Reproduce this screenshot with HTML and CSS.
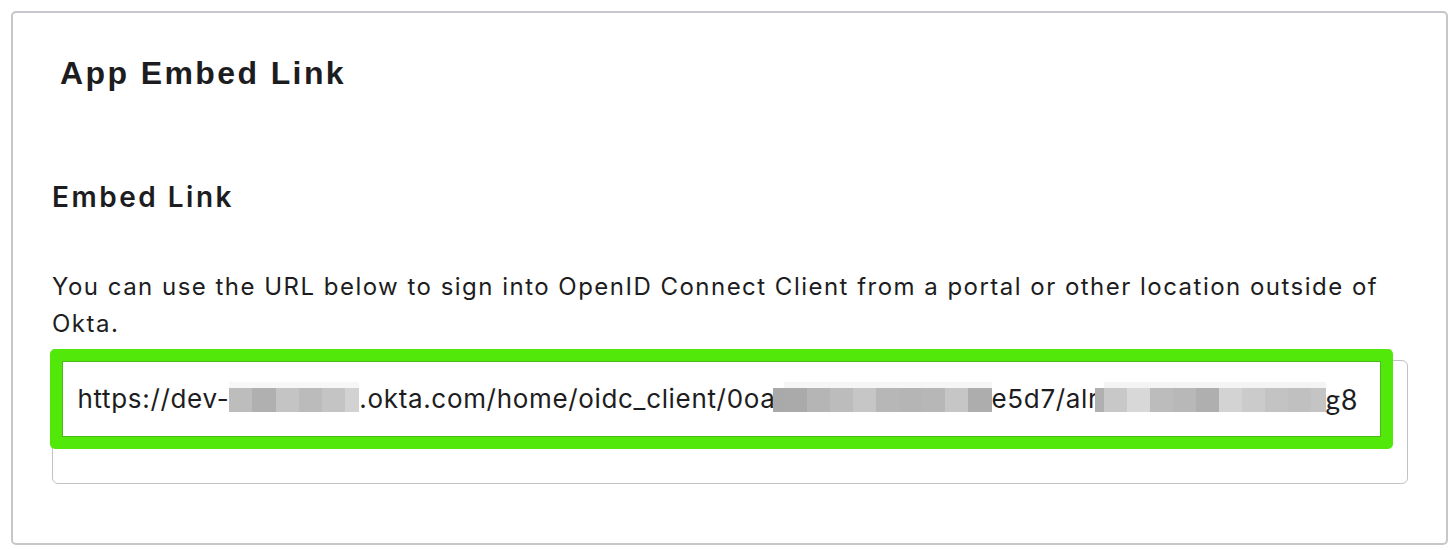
FILE: index.html
```html
<!DOCTYPE html>
<html lang="en">
<head>
<meta charset="utf-8">
<title>App Embed Link</title>
<link rel="stylesheet" href="styles.css">
</head>
<body>
<section class="card">
  <h1 class="card-title">App Embed Link</h1>
  <h2 class="section-title">Embed Link</h2>
  <p class="desc">You can use the URL below to sign into OpenID Connect Client from a portal or other location outside of Okta.</p>
  <div class="field">
    <div class="url"><span>https://dev-</span><span class="mosaic m1"></span><span>.okta.com/home/oidc_client/0oa</span><span class="mosaic m2"></span><span>e5d7/alr</span><span class="mosaic m3"></span><span class="tail">g8</span></div>
    <div class="highlight"></div>
  </div>
</section>
</body>
</html>
```

FILE: styles.css
```css
html, body {
  margin: 0;
  padding: 0;
  background: #ffffff;
}

body {
  padding: 11px 6px 5px 11px;
  font-family: Inter, "Noto Sans", "Liberation Sans", sans-serif;
  color: #1d1d21;
}

.card {
  box-sizing: border-box;
  width: 1437px;
  height: 534px;
  border: 2px solid #c6c6cb;
  border-radius: 5px;
  padding: 40px 38px 0 39px;
  display: flex;
  flex-direction: column;
}

.card-title {
  margin: 0 0 0 8px;
  font-family: "Liberation Sans", Arial, sans-serif;
  font-weight: 700;
  font-size: 32px;
  line-height: 40px;
  letter-spacing: 2.4px;
  color: #1d1d21;
}

.section-title {
  margin: 86px 0 0 0;
  font-weight: 600;
  font-size: 28px;
  line-height: 36px;
  letter-spacing: 2.5px;
  color: #1d1d21;
}

.desc {
  margin: 53px 0 0 0;
  font-size: 24px;
  line-height: 37px;
  font-weight: 400;
  letter-spacing: 1.48px;
  color: #1d1d21;
}

.field {
  position: relative;
  margin-top: 18px;
  height: 124px;
  box-sizing: border-box;
  border: 1.5px solid #c1c1c6;
  border-radius: 6px;
  padding: 19.5px 0 0 24.5px;
}

.url {
  display: flex;
  align-items: flex-start;
  font-size: 26px;
  line-height: 36px;
  letter-spacing: 0.67px;
  white-space: nowrap;
  color: #1d1d21;
}

.mosaic {
  display: inline-block;
  flex: none;
  height: 30px;
  margin-top: 1px;
}

.m1 {
  width: 130px;
  background:
    linear-gradient(#f7f7f7, #f7f7f7) 0 0 / 100% 6px no-repeat,
    linear-gradient(to right, #bdbdbd 0 23px, #b0b0b0 23px 47px, #c4c4c4 47px 70px, #bbbbbb 70px 93px, #c4c4c4 93px 116px, #d2d2d2 116px 130px) 0 6px / 100% 24px no-repeat;
}

.m2 {
  width: 219px;
  margin-left: -3px;
  background:
    linear-gradient(to right, #fff 0 11px, #f6f6f6 11px 100%) 0 0 / 100% 6px no-repeat,
    linear-gradient(to right, #a9a9a9 0 11px, #aaaaaa 11px 34px, #b5b5b5 34px 57px, #bcbcbc 57px 80px, #c6c6c6 80px 103px, #b7b7b7 103px 126px, #b5b5b5 126px 149px, #b7b7b7 149px 172px, #c6c6c6 172px 195px, #adadad 195px 219px) 0 6px / 100% 24px no-repeat;
}

.m3 {
  width: 231px;
  margin-left: -4px;
  background:
    linear-gradient(to right, #fff 0 9px, #f4f4f4 9px 100%) 0 0 / 100% 6px no-repeat,
    linear-gradient(to right, #b0b0b0 0 9px, #c8c8c8 9px 32px, #d8d8d8 32px 55px, #bcbcbc 55px 78px, #b8b8b8 78px 101px, #afafaf 101px 124px, #d3d3d3 124px 147px, #cbcbcb 147px 170px, #c3c3c3 170px 193px, #c0c0c0 193px 216px, #c4c4c4 216px 231px) 0 6px / 100% 24px no-repeat;
}

.tail {
  font-family: Lato, "Liberation Sans", sans-serif;
  font-size: 28px;
  letter-spacing: 0.8px;
}

.highlight {
  position: absolute;
  left: -3.5px;
  top: -12.5px;
  width: 1343px;
  height: 100px;
  box-sizing: border-box;
  border: 12px solid #52e80a;
  border-radius: 5px;
  box-shadow: inset 0 0 0 1px #49b81a;
}
```
